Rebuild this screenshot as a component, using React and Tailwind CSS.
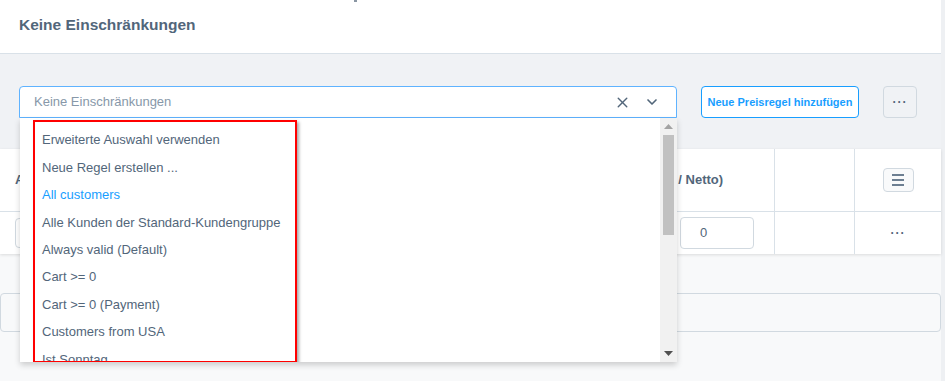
import { X, ChevronDown } from "lucide-react";

const rules = [
  "Erweiterte Auswahl verwenden",
  "Neue Regel erstellen ...",
  "All customers",
  "Alle Kunden der Standard-Kundengruppe",
  "Always valid (Default)",
  "Cart >= 0",
  "Cart >= 0 (Payment)",
  "Customers from USA",
  "Ist Sonntag",
];

function RuleDropdown() {
  return (
    <div className="absolute left-px right-0 top-full z-10 flex h-[244px] bg-white shadow-[0_3px_6px_rgba(0,0,0,0.18)]">
      <ul className="relative flex-1 overflow-hidden pt-[8.5px] pl-[22px]">
        {rules.map((rule, i) => (
          <li
            key={rule}
            className={`flex h-[27.4px] items-center text-[13px] ${
              i === 2 ? "text-[#189eff]" : "text-[#52667a]"
            }`}
          >
            {rule}
          </li>
        ))}
        {/* highlight frame drawn over the list */}
        <div className="pointer-events-none absolute left-[13px] top-[2px] h-[243px] w-[264px] border-2 border-[#ff0000] shadow-[2px_2px_3px_rgba(0,0,0,0.35)]" />
      </ul>
      <div className="flex w-[17px] flex-col items-center bg-[#f1f1f1]">
        <svg width="9" height="5" viewBox="0 0 9 5" className="mt-[6px]">
          <path d="M0 5 L4.5 0 L9 5 Z" fill="#a3a3a3" />
        </svg>
        <div className="mt-[6px] h-[100px] w-[11px] bg-[#c1c1c1]" />
        <svg width="9" height="5" viewBox="0 0 9 5" className="mt-auto mb-[6px]">
          <path d="M0 0 L9 0 L4.5 5 Z" fill="#505050" />
        </svg>
      </div>
    </div>
  );
}

export default function App() {
  return (
    <div className="h-[381px] w-[945px] overflow-hidden bg-[#eef0f3] font-['Liberation_Sans',sans-serif]">
      <div className="w-[941px]">
        <header className="relative flex h-[54px] items-start border-b border-[#d9e1e8] bg-white px-[19px] pt-[13px]">
          <span className="absolute left-[354px] top-0 h-[2px] w-[3px] bg-[#8a96a3]" />
          <h1 className="text-[15.5px] font-bold text-[#52667a]">Keine Einschränkungen</h1>
        </header>

        <section className="bg-[#f0f2f5] pb-[31px] pl-[19px] pt-[32px]">
          <div className="flex items-center gap-6">
            <div className="relative w-[658px]">
              <div className="flex h-[32px] items-center rounded-t-[4px] border border-[#5fb3ff] bg-white pl-[14px] pr-[16px]">
                <span className="flex-1 text-[13px] text-[#8798a9]">Keine Einschränkungen</span>
                <X size={17} strokeWidth={2} className="text-[#52667a]" />
                <ChevronDown size={16} strokeWidth={2.5} className="ml-[13px] text-[#52667a]" />
              </div>
              <RuleDropdown />
            </div>
            <button
              type="button"
              className="h-[32px] w-[158px] rounded-[4px] border border-[#189eff] bg-white text-[11px] font-bold text-[#189eff]"
            >
              Neue Preisregel hinzufügen
            </button>
            <button
              type="button"
              className="flex h-[32px] w-[34px] items-center justify-center rounded-[4px] border border-[#d1d9e0] bg-[#f0f2f5] text-[12px] font-bold leading-none tracking-[1px] text-[#52667a]"
            >
              ···
            </button>
          </div>
        </section>

        <div className="bg-[#f8f9fa] pb-[49px]">
          <div className="bg-white shadow-[0_1px_3px_rgba(0,0,0,0.12)]">
            <div className="grid h-[63px] grid-cols-[581px_193px_80px_87px] border-b border-[#d9e1e8]">
              <div className="flex items-center px-[15px] text-[13px] font-bold text-[#52667a]">Anzahl</div>
              <div className="flex items-center pl-[15px] text-[13px] font-bold text-[#52667a]">
                Preis (Brutto / Netto)
              </div>
              <div className="border-l border-[#d9e1e8]" />
              <div className="flex items-center justify-center border-l border-[#d9e1e8]">
                <button
                  type="button"
                  className="flex h-[24px] w-[31px] flex-col items-center justify-center gap-[3px] rounded-[4px] border border-[#d1d9e0] bg-[#f9fafb]"
                >
                  <span className="h-[2px] w-[12px] bg-[#6d7f92]" />
                  <span className="h-[2px] w-[12px] bg-[#6d7f92]" />
                  <span className="h-[2px] w-[12px] bg-[#6d7f92]" />
                </button>
              </div>
            </div>
            <div className="grid h-[42px] grid-cols-[581px_193px_80px_87px]">
              <div className="flex items-center px-[15px]">
                <div className="h-[30px] w-full rounded-[4px] border border-[#d1d9e0]" />
              </div>
              <div className="flex items-center justify-end pr-[20px]">
                <div className="flex h-[32px] w-[74px] items-center rounded-[4px] border border-[#d1d9e0] pl-[19px] text-[13px] text-[#52667a]">
                  0
                </div>
              </div>
              <div className="border-l border-[#d9e1e8]" />
              <div className="flex items-center justify-center border-l border-[#d9e1e8] text-[12px] font-bold tracking-[1px] text-[#52667a]">
                ···
              </div>
            </div>
          </div>
          <div className="mt-[39px] h-[39px] rounded-[4px] border border-[#d1d9e0] bg-[#f8f9fa]" />
        </div>
      </div>
    </div>
  );
}
